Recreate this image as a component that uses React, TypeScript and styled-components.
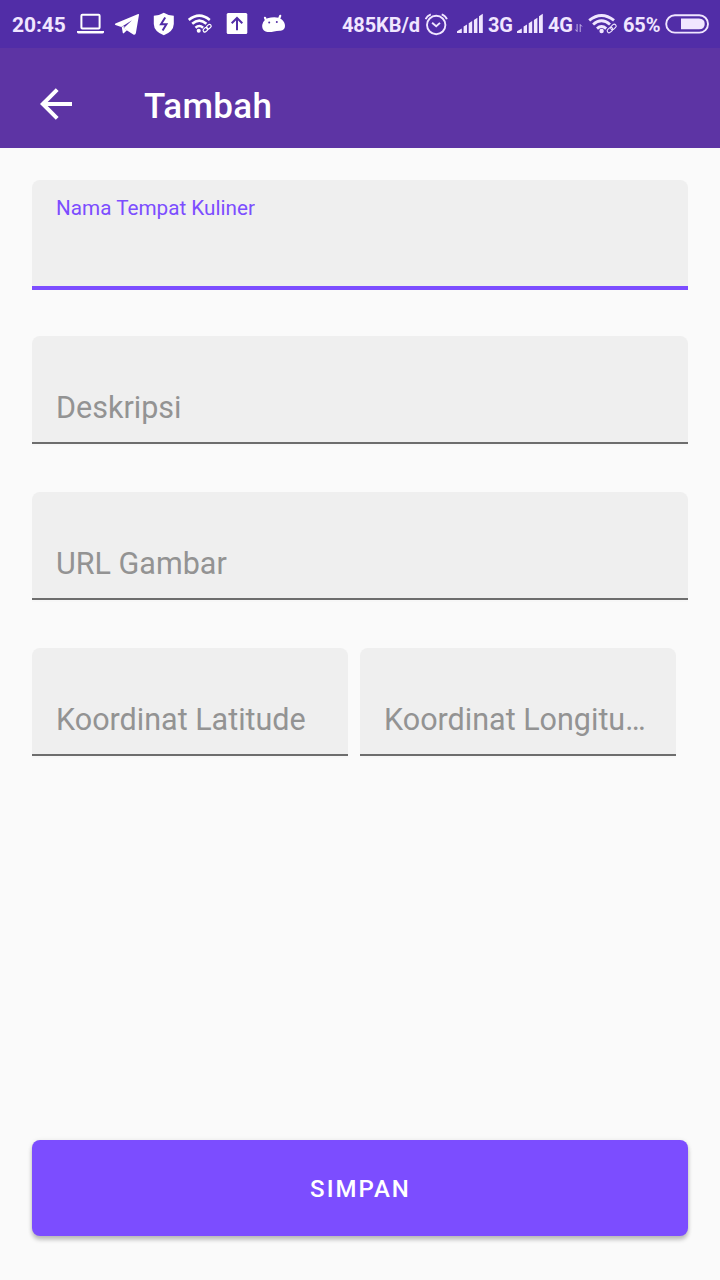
import React from 'react';
import styled, { createGlobalStyle } from 'styled-components';

const GlobalStyle = createGlobalStyle`
  * { box-sizing: border-box; }
  body { margin: 0; background: #fafafa; font-family: Roboto, "Liberation Sans", sans-serif; }
`;

const Screen = styled.div`
  display: flex;
  flex-direction: column;
  width: 720px;
  height: 1280px;
  background: #fafafa;
`;

const StatusBar = styled.div`
  display: flex;
  flex: none;
  height: 48px;
  padding: 0 11px 0 12px;
  background: #512da7;
  color: #f0e6ff;
`;

const StatusGroup = styled.div<{ $end?: boolean }>`
  display: flex;
  align-items: center;
  margin-left: ${(p) => (p.$end ? 'auto' : '0')};
`;

const StatusText = styled.span<{ $width: number; $gap?: number; $size?: number }>`
  flex: none;
  width: ${(p) => p.$width}px;
  margin-left: ${(p) => p.$gap ?? 0}px;
  font-size: ${(p) => p.$size ?? 20}px;
  font-weight: 700;
  line-height: 48px;
  padding-top: 1px;
  letter-spacing: -0.1px;
  white-space: nowrap;
`;

const StatusIcon = styled.svg<{ $gap?: number; $bright?: boolean }>`
  flex: none;
  display: block;
  margin-left: ${(p) => p.$gap ?? 0}px;
  color: ${(p) => (p.$bright ? '#ffffff' : '#f0e6ff')};
  fill: none;
  stroke: none;
`;

const AppBar = styled.header`
  display: flex;
  flex: none;
  align-items: center;
  height: 100px;
  padding: 12px 32px 0 40px;
  background: #5d34a4;
  color: #fff;
`;

const BackButton = styled.button`
  display: flex;
  width: 32px;
  height: 32px;
  margin: 0 72px 0 0;
  padding: 0;
  border: 0;
  background: none;
  color: inherit;
`;

const Title = styled.h1`
  margin: 5px 0 0;
  font-size: 35px;
  font-weight: 500;
  line-height: 40px;
  letter-spacing: 0.3px;
`;

const Form = styled.form`
  display: flex;
  flex: 1;
  flex-direction: column;
  gap: 46px;
  padding: 32px 32px 44px;
`;

const Field = styled.label<{ $active?: boolean }>`
  display: flex;
  flex: none;
  min-width: 0;
  height: 110px;
  align-items: flex-start;
  padding: ${(p) => (p.$active ? '16px' : '51px')} 24px 0;
  border-radius: 8px 8px 0 0;
  background: ${(p) =>
    p.$active
      ? 'linear-gradient(#7c4dff, #7c4dff) 0 106px / 100% 4px no-repeat, #efefef'
      : 'linear-gradient(#6d6d6d, #6d6d6d) 0 106px / 100% 2px no-repeat, linear-gradient(#f7f7f7, #f7f7f7) 0 108px / 100% 2px no-repeat, #efefef'};
`;

const FieldLabel = styled.span<{ $active?: boolean }>`
  overflow: hidden;
  color: ${(p) => (p.$active ? '#7c4dff' : '#939393')};
  font-size: ${(p) => (p.$active ? '20.7px' : '30.5px')};
  line-height: ${(p) => (p.$active ? '24px' : '41px')};
  text-overflow: ellipsis;
  white-space: nowrap;
`;

const CoordinateRow = styled.div`
  display: grid;
  grid-template-columns: 316px 316px;
  gap: 12px;
`;

const SaveButton = styled.button`
  flex: none;
  height: 96px;
  margin-top: auto;
  padding: 2px 0 0 1px;
  border: 0;
  border-radius: 8px;
  background: #7c4dff;
  box-shadow: 0 4px 4px rgba(0, 0, 0, 0.2), 0 1px 5px rgba(0, 0, 0, 0.12);
  color: #fff;
  font-family: inherit;
  font-size: 24px;
  font-weight: 500;
  letter-spacing: 2px;
`;

const LinkedWifi = ({ gap, bright }: { gap: number; bright?: boolean }) => (
  <StatusIcon $gap={gap} $bright={bright} width="30" height="48" viewBox="0 0 30 48">
    <g stroke="currentColor" strokeWidth="2.9">
      <path d="M1.2 20.3Q13.5 10.5 26 20.3" />
      <path d="M5.1 24.5Q13.5 17.2 22 24.5" />
      <path d="M9 28.6Q13.5 24.6 18.2 28.6" />
    </g>
    <circle cx="13.6" cy="31" r="2.2" fill="currentColor" />
    <g stroke="currentColor" strokeWidth="1.1">
      <rect x="-3.1" y="-1.9" width="6.2" height="3.8" rx="1.9" transform="translate(22 30) rotate(-43)" />
      <rect x="-3.1" y="-1.9" width="6.2" height="3.8" rx="1.9" transform="translate(25.4 26.9) rotate(-43)" />
    </g>
  </StatusIcon>
);

const Signal = ({ gap }: { gap: number }) => (
  <StatusIcon $gap={gap} width="26" height="48" viewBox="0 0 26 48">
    <path
      fill="currentColor"
      d="M0 33V31.3L4.8 28.4V33ZM6.6 33V26.6L10 24.6V33ZM11.7 33V23.2L15.2 21.1V33ZM16.9 33V20L20.4 17.8V33ZM22 33V16.2L25.8 13.8V33Z"
    />
  </StatusIcon>
);

export default function App() {
  return (
    <Screen>
      <GlobalStyle />
      <StatusBar>
        <StatusGroup>
          <StatusText $width={54} $size={21}>20:45</StatusText>
          <StatusIcon $gap={11} $bright width="27" height="48" viewBox="0 0 27 48">
            <rect x="4.4" y="14.8" width="18.2" height="13.6" rx="1" stroke="currentColor" strokeWidth="2" />
            <path d="M0 31H27V32.5Q26.5 33.5 25.5 33.5H1.5Q.5 33.5 0 32.5Z" fill="currentColor" />
          </StatusIcon>
          <StatusIcon $gap={10} $bright width="26" height="48" viewBox="0 0 26 48">
            <path d="M24.2 14L1.4 23.4Q.3 24.3 1.4 25L7.3 27 18 20.2 9.6 28.2 19.3 34.5Q21.4 35.4 21.9 33L25 14.7Q25 13.7 24.2 14Z" fill="currentColor" />
            <path d="M7.7 26.8L8.8 33Q9.2 33.8 10 33L13 30.2 9.6 28.1 10.5 26Z" fill="currentColor" />
          </StatusIcon>
          <StatusIcon $gap={13} $bright width="22" height="48" viewBox="0 0 22 48">
            <path d="M10.8 12.7Q15 15.5 20.8 15.7V24Q20.5 31.5 10.8 35.2 1 31.5.8 24V15.7Q6.5 15.5 10.8 12.7Z" fill="currentColor" />
            <path d="M12.2 17.5L8 24.3H13.4L9.6 30.5" stroke="#512da7" strokeWidth="2" />
          </StatusIcon>
          <StatusIcon $gap={13} $bright width="26" height="48" viewBox="0 0 26 48">
            <g stroke="currentColor" strokeWidth="2.6">
              <path d="M.8 19.9Q11.3 11.3 21.8 19.9" />
              <path d="M4.2 23.8Q11.3 17.3 18.4 23.8" />
              <path d="M7.5 27.7Q11.3 24.3 15.1 27.7" />
            </g>
            <circle cx="10.7" cy="30.7" r="2" fill="currentColor" />
            <g stroke="currentColor" strokeWidth="1.2">
              <rect x="-2.6" y="-1.7" width="5.2" height="3.4" rx="1.7" transform="translate(17.5 29.7) rotate(-43)" />
              <rect x="-2.6" y="-1.7" width="5.2" height="3.4" rx="1.7" transform="translate(20.8 26.7) rotate(-43)" />
            </g>
          </StatusIcon>
          <StatusIcon $gap={12} $bright width="22" height="48" viewBox="0 0 22 48">
            <rect x=".7" y="13" width="20.6" height="21" rx="1.5" fill="currentColor" />
            <path d="M11 30.3V18.5M5.7 23.3L11 18 16.3 23.3" stroke="#512da7" strokeWidth="2" />
          </StatusIcon>
          <StatusIcon $gap={13} $bright width="25" height="48" viewBox="0 0 25 48">
            <path d="M5.2 20.5L4 17.8M18 19L19.2 15.8" stroke="currentColor" strokeWidth="2.2" strokeLinecap="round" />
            <path d="M1.2 25Q2.2 18.4 10 17.4 17 16.4 20.8 19.4 24 22 24 26 23.8 30.3 19.5 30.7 16 30.6 13 31.4 8 32.4 4.6 31.4 .7 30 1.2 25Z" fill="currentColor" />
            <circle cx="8.2" cy="22.6" r="1" fill="#512da7" />
            <circle cx="15.8" cy="22.1" r="1" fill="#512da7" />
          </StatusIcon>
        </StatusGroup>

        <StatusGroup $end>
          <StatusText $width={78}>485KB/d</StatusText>
          <StatusIcon $gap={5} width="23" height="48" viewBox="0 0 23 48">
            <g stroke="currentColor" strokeWidth="1.9">
              <circle cx="11.2" cy="25" r="9.2" />
              <path d="M.6 19.3Q1.8 15.8 5.8 14.3M16.7 14.3Q20.7 15.8 21.9 19.3" />
              <path d="M7.1 22.8L11.2 26.3 15 22.9" />
            </g>
          </StatusIcon>
          <Signal gap={9} />
          <StatusText $width={25} $gap={5}>3G</StatusText>
          <Signal gap={4} />
          <StatusText $width={25} $gap={5}>4G</StatusText>
          <StatusIcon $gap={2} width="8" height="48" viewBox="0 0 8 48">
            <path d="M2.1 24V31.5L.3 29.5M5.2 32V24.5L7 26.5" stroke="currentColor" strokeWidth="1" opacity=".7" />
          </StatusIcon>
          <LinkedWifi gap={5} />
          <StatusText $width={37} $gap={5}>65%</StatusText>
          <StatusIcon $gap={5} width="44" height="48" viewBox="0 0 44 48">
            <rect x="1.2" y="15.2" width="41.8" height="17.4" rx="8.7" stroke="currentColor" strokeWidth="1.9" />
            <path d="M16 18.5H34Q39.7 18.7 39.7 23.9 39.7 29 34 29.3H16Z" fill="currentColor" />
          </StatusIcon>
        </StatusGroup>
      </StatusBar>

      <AppBar>
        <BackButton aria-label="Kembali">
          <svg width="32" height="32" viewBox="0 0 32 32" fill="none" stroke="currentColor" strokeWidth="4">
            <path d="M32 14H4M17.2 -.4L2.8 14 17.2 28.4" transform="translate(0 2)" />
          </svg>
        </BackButton>
        <Title>Tambah</Title>
      </AppBar>

      <Form>
        <Field $active>
          <FieldLabel $active>Nama Tempat Kuliner</FieldLabel>
        </Field>
        <Field>
          <FieldLabel>Deskripsi</FieldLabel>
        </Field>
        <Field>
          <FieldLabel>URL Gambar</FieldLabel>
        </Field>
        <CoordinateRow>
          <Field>
            <FieldLabel>Koordinat Latitude</FieldLabel>
          </Field>
          <Field>
            <FieldLabel>Koordinat Longitude</FieldLabel>
          </Field>
        </CoordinateRow>
        <SaveButton type="button">SIMPAN</SaveButton>
      </Form>
    </Screen>
  );
}
